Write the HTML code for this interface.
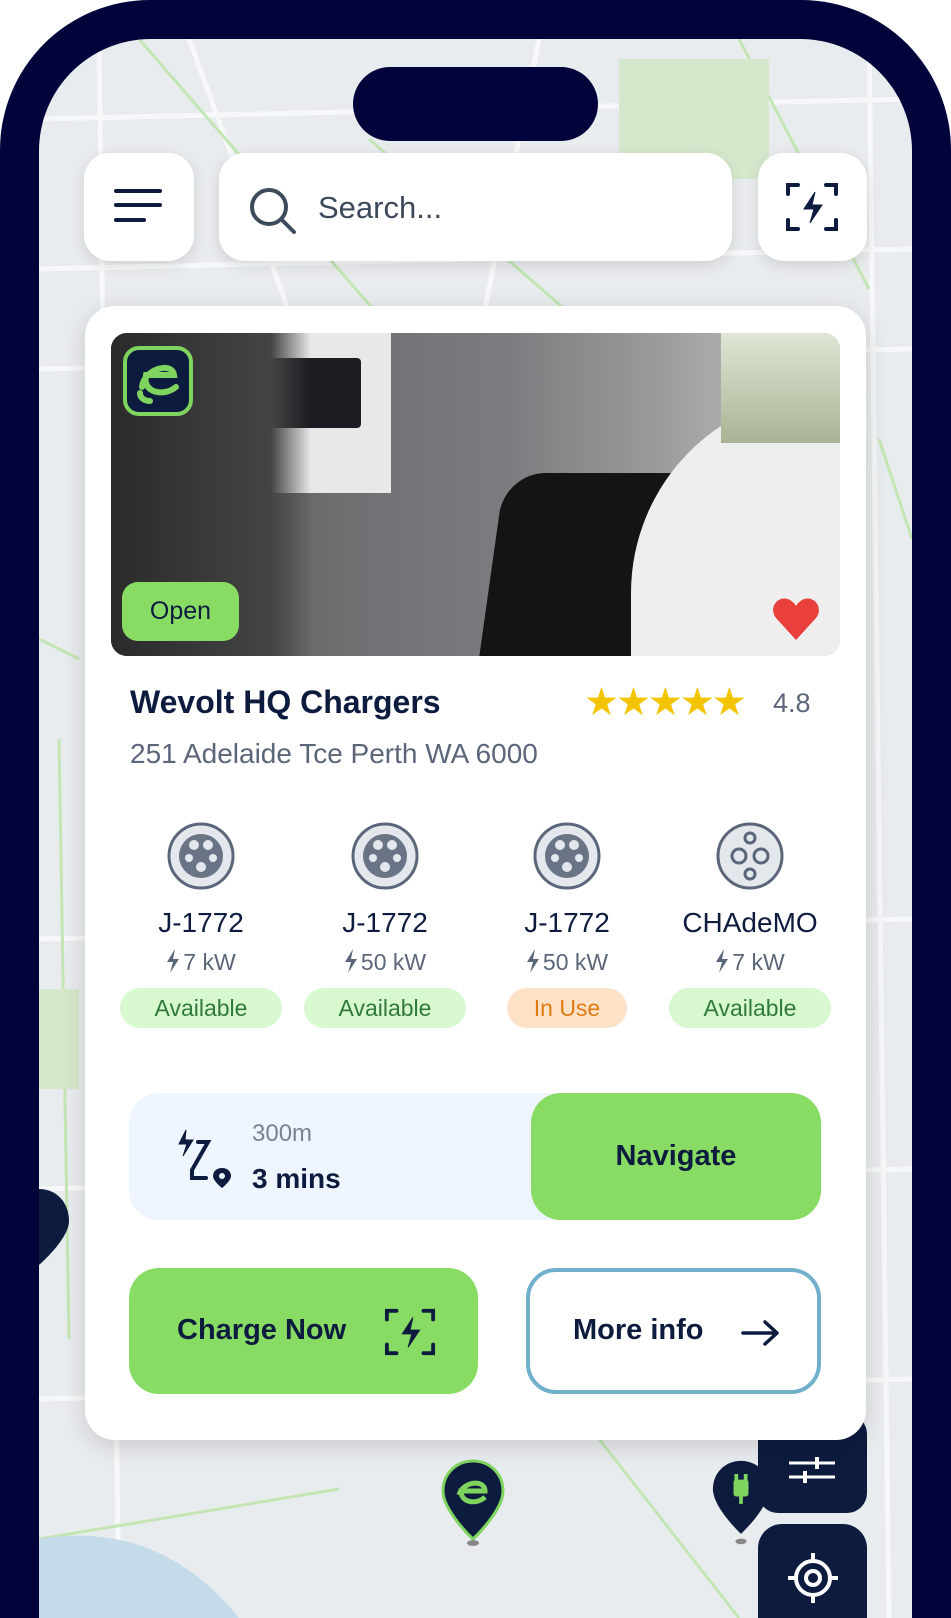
<!DOCTYPE html>
<html><head><meta charset="utf-8"><style>
*{margin:0;padding:0;box-sizing:border-box}
html,body{width:951px;height:1618px;overflow:hidden}
body{background:#fff;font-family:"Liberation Sans",sans-serif;position:relative}
.frame{position:absolute;left:0;top:0;width:951px;height:1618px;background:#02033a;border-radius:150px 150px 0 0}
.screen{position:absolute;left:39px;top:39px;width:873px;height:1579px;border-radius:112px 112px 0 0;overflow:hidden;background:#e9ecee}
.abs{position:absolute}
.btn{position:absolute;background:#fff;border-radius:26px;box-shadow:0 4px 14px rgba(0,0,0,.12)}
.card{position:absolute;left:85px;top:306px;width:781px;height:1134px;background:#fff;border-radius:30px;box-shadow:0 6px 24px rgba(0,0,0,.15)}
.conn{position:absolute;width:170px;text-align:center}
.conn .n{font-size:28px;color:#0d1b3e;margin-top:8px}
.conn .k{font-size:23px;color:#5c667a;margin-top:10px}
.conn .k svg{vertical-align:-3px;margin-right:3px}
.pill{display:inline-block;width:162px;height:40px;line-height:40px;border-radius:20px;font-size:23px;margin-top:12px}
.av{background:#d8f8d0;color:#2f7a3a}.iu{background:#fde2c8;color:#e07a12}
</style></head><body>
<div class="frame"></div>
<div class="screen">
<svg class="abs" style="left:0;top:0" width="873" height="1579">
<g stroke="#f7f8f9" stroke-width="5" fill="none">
<path d="M0 80 L873 60 M0 230 L873 210 M0 330 L873 310 M60 0 L80 1579 M830 0 L850 1579 M0 900 L873 880 M0 1150 L873 1130 M0 1360 L873 1340 M150 0 L260 300 M500 0 L440 300"/>
</g>
<g stroke="#c4e6b4" stroke-width="3" fill="none">
<path d="M100 0 L360 300 M330 100 L560 300 M700 0 L830 250 M0 600 L40 620 M0 1500 L300 1450 M560 1400 L700 1579 M840 400 L873 500 M20 700 L30 1300"/>
</g>
<rect x="580" y="20" width="150" height="120" fill="#d6e8cc"/>
<rect x="0" y="950" width="40" height="100" fill="#d6e8cc"/>
<path d="M0 1500 Q120 1480 200 1579 L0 1579Z" fill="#c4dbea"/>
</svg>
<svg class="abs" style="left:402px;top:1420px" width="64" height="88" viewBox="0 0 64 88"><path d="M32 2C15 2 2 15 2 32c0 20 30 48 30 48s30-28 30-48C62 15 49 2 32 2z" fill="#0d1b3e" stroke="#7fd45f" stroke-width="3"/><path d="M18 36c4-14 26-16 26-4H20c0 12 16 14 24 6" stroke="#7fd45f" stroke-width="5" fill="none"/><ellipse cx="32" cy="84" rx="6" ry="3" fill="#888"/></svg>
<svg class="abs" style="left:672px;top:1420px" width="60" height="88" viewBox="0 0 64 94"><path d="M32 2C15 2 2 15 2 32c0 20 30 48 30 48s30-28 30-48C62 15 49 2 32 2z" fill="#0d1b3e"/><rect x="24" y="22" width="16" height="18" rx="3" fill="#7fd45f"/><path d="M27 16v8M37 16v8M32 40v8" stroke="#7fd45f" stroke-width="4"/><ellipse cx="32" cy="88" rx="6" ry="3" fill="#888"/></svg>
<svg class="abs" style="left:0;top:1150px" width="32" height="80"><path d="M0 0C18 0 30 14 30 32c0 18-30 44-30 44z" fill="#0d1b3e"/></svg>
<div class="abs" style="left:719px;top:1375px;width:109px;height:99px;background:#0d1b3e;border-radius:20px"></div>
<svg class="abs" style="left:748px;top:1402px" width="50" height="50"><path d="M2 22h46M2 36h46" stroke="#fff" stroke-width="3"/><path d="M30 16v12M18 30v12" stroke="#fff" stroke-width="4"/></svg>
<div class="abs" style="left:719px;top:1485px;width:109px;height:120px;background:#0d1b3e;border-radius:24px"></div>
<svg class="abs" style="left:745px;top:1510px" width="58" height="58" viewBox="0 0 58 58" fill="none" stroke="#fff" stroke-width="4"><circle cx="29" cy="29" r="17"/><circle cx="29" cy="29" r="7"/><path d="M29 4v8M29 46v8M4 29h8M46 29h8"/></svg>
</div>
<div class="abs" style="left:353px;top:67px;width:245px;height:74px;border-radius:37px;background:#02033a"></div>
<div class="btn" style="left:84px;top:153px;width:110px;height:108px"></div>
<svg class="abs" style="left:114px;top:187px" width="50" height="40"><path d="M2 4h44M2 18h44M2 33h28" stroke="#0d1b3e" stroke-width="4" stroke-linecap="round"/></svg>
<div class="btn" style="left:219px;top:153px;width:513px;height:108px"></div>
<svg class="abs" style="left:248px;top:186px" width="50" height="50" viewBox="0 0 50 50" fill="none" stroke="#3d4a5c" stroke-width="4"><circle cx="21" cy="21" r="17"/><path d="M34 34l12 12" stroke-linecap="round"/></svg>
<div class="abs" style="left:318px;top:190px;font-size:31px;color:#3d4a5c">Search...</div>
<div class="btn" style="left:758px;top:153px;width:109px;height:108px"></div>
<svg class="abs" style="left:785px;top:180px" width="54" height="54" viewBox="0 0 54 54" fill="none" stroke="#0d1b3e" stroke-width="4" stroke-linecap="round"><path d="M3 14V5h10M41 5h10v9M51 40v9H41M13 49H3v-9"/><path d="M30 12L19 29h10l-4 14 12-18H27z" fill="#0d1b3e" stroke-width="1"/></svg>
<div class="card"></div>
<div class="abs" style="left:111px;top:333px;width:729px;height:323px;border-radius:16px;overflow:hidden;background:linear-gradient(90deg,#3a3a3a 0%,#6c6e70 30%,#7b7d80 55%,#9a9c9a 75%,#c8c9c5 100%)">
<div class="abs" style="left:110px;top:0;width:170px;height:160px;background:#e8e8e8"></div>
<div class="abs" style="left:160px;top:25px;width:90px;height:70px;background:#1b1d22;border-radius:4px"></div>
<div class="abs" style="left:0;top:0;width:200px;height:323px;background:linear-gradient(90deg,#2a2a2a,#444 80%,transparent)"></div>
<div class="abs" style="left:380px;top:140px;width:220px;height:200px;background:#141414;border-radius:40px 30px 0 0;transform:skewX(-8deg)"></div>
<div class="abs" style="left:520px;top:60px;width:260px;height:300px;background:#eeeeee;border-radius:200px 0 0 0"></div>
<div class="abs" style="left:610px;top:0;width:130px;height:110px;background:linear-gradient(#dfe6d4,#a8b494)"></div>
</div>
<svg class="abs" style="left:122px;top:345px" width="72" height="72" viewBox="0 0 72 72"><rect x="3" y="3" width="66" height="66" rx="14" fill="#0d1b3e" stroke="#7fd45f" stroke-width="4"/><path d="M20 42c2-18 30-26 32-12H24c-4 18 18 22 30 12M28 56c-4 0-10-2-10-8" stroke="#7fd45f" stroke-width="6" fill="none" stroke-linecap="round"/></svg>
<div class="abs" style="left:122px;top:582px;width:117px;height:59px;border-radius:16px;background:#88dc64;font-size:25px;color:#0d1b3e;text-align:center;line-height:59px">Open</div>
<svg class="abs" style="left:772px;top:596px" width="48" height="46" viewBox="0 0 48 46"><path d="M24 44L4 22C-4 12 6-2 18 4c3 2 5 4 6 6 1-2 3-4 6-6 12-6 22 8 14 18z" fill="#e9403c"/></svg>
<div class="abs" style="left:130px;top:684px;font-size:32px;font-weight:bold;color:#0d1b3e">Wevolt HQ Chargers</div>
<div class="abs" style="left:130px;top:738px;font-size:28px;color:#5c667a">251 Adelaide Tce Perth WA 6000</div>
<div class="abs" style="left:584px;top:680px;font-size:39px;color:#f5c400;letter-spacing:-3px">★★★★★</div>
<div class="abs" style="left:773px;top:688px;font-size:27px;color:#5c667a">4.8</div>
<svg width="0" height="0" style="position:absolute"><defs>
<g id="j"><circle cx="36" cy="36" r="32" fill="#e4e7ec" stroke="#5c667a" stroke-width="3"/><circle cx="36" cy="36" r="22" fill="#6b7486"/><g fill="#e4e7ec"><circle cx="29" cy="25" r="5"/><circle cx="43" cy="25" r="5"/><circle cx="36" cy="47" r="5"/><circle cx="24" cy="38" r="4"/><circle cx="48" cy="38" r="4"/></g></g>
<g id="c"><circle cx="36" cy="36" r="32" fill="#e4e7ec" stroke="#5c667a" stroke-width="3"/><g fill="none" stroke="#5c667a" stroke-width="3"><circle cx="25" cy="36" r="7"/><circle cx="47" cy="36" r="7"/><circle cx="36" cy="18" r="5"/><circle cx="36" cy="54" r="5"/></g></g>
<path id="b" d="M9 0L1 13h6l-3 11 9-14H7z" fill="#5c667a"/>
</defs></svg>
<div class="conn" style="left:116px;top:820px"><svg width="72" height="74"><use href="#j"/></svg><div class="n">J-1772</div><div class="k"><svg width="14" height="24"><use href="#b"/></svg>7 kW</div><span class="pill av">Available</span></div>
<div class="conn" style="left:300px;top:820px"><svg width="72" height="74"><use href="#j"/></svg><div class="n">J-1772</div><div class="k"><svg width="14" height="24"><use href="#b"/></svg>50 kW</div><span class="pill av">Available</span></div>
<div class="conn" style="left:482px;top:820px"><svg width="72" height="74"><use href="#j"/></svg><div class="n">J-1772</div><div class="k"><svg width="14" height="24"><use href="#b"/></svg>50 kW</div><span class="pill iu" style="width:120px">In Use</span></div>
<div class="conn" style="left:665px;top:820px"><svg width="72" height="74"><use href="#c"/></svg><div class="n">CHAdeMO</div><div class="k"><svg width="14" height="24"><use href="#b"/></svg>7 kW</div><span class="pill av">Available</span></div>
<div class="abs" style="left:129px;top:1093px;width:692px;height:127px;border-radius:30px;background:#eef5fe"></div>
<div class="abs" style="left:531px;top:1093px;width:290px;height:127px;border-radius:30px;background:#88dc64;font-size:29px;font-weight:bold;color:#0d1b3e;text-align:center;line-height:127px">Navigate</div>
<svg class="abs" style="left:174px;top:1128px" width="62" height="62" viewBox="0 0 62 62" fill="none" stroke="#0d1b3e" stroke-width="4" stroke-linecap="round"><path d="M12 2L5 16h8l-4 12 10-16h-8z" fill="#0d1b3e" stroke-width="1"/><path d="M24 14h10L18 42v8h14"/><path d="M48 40c-6 0-9 4-9 8 0 5 9 12 9 12s9-7 9-12c0-4-3-8-9-8z" fill="#0d1b3e" stroke="none"/><circle cx="48" cy="48" r="3" fill="#eef5fe" stroke="none"/></svg>
<div class="abs" style="left:252px;top:1120px;font-size:24px;color:#7a8394">300m</div>
<div class="abs" style="left:252px;top:1163px;font-size:28px;font-weight:bold;color:#0d1b3e">3 mins</div>
<div class="abs" style="left:129px;top:1268px;width:349px;height:126px;border-radius:30px;background:#88dc64"></div>
<div class="abs" style="left:177px;top:1314px;font-size:29px;font-weight:bold;color:#0d1b3e">Charge Now</div>
<svg class="abs" style="left:384px;top:1306px" width="52" height="52" viewBox="0 0 54 54" fill="none" stroke="#0d1b3e" stroke-width="4" stroke-linecap="round"><path d="M3 14V5h10M41 5h10v9M51 40v9H41M13 49H3v-9"/><path d="M30 12L19 29h10l-4 14 12-18H27z" fill="#0d1b3e" stroke-width="1"/></svg>
<div class="abs" style="left:526px;top:1268px;width:295px;height:126px;border-radius:30px;border:4px solid #70b0cc;background:#fff"></div>
<div class="abs" style="left:573px;top:1314px;font-size:29px;font-weight:bold;color:#0d1b3e">More info</div>
<svg class="abs" style="left:741px;top:1318px" width="40" height="30"><path d="M2 15h34M24 4l12 11-12 11" stroke="#0d1b3e" stroke-width="3.5" fill="none" stroke-linecap="round" stroke-linejoin="round"/></svg>
</body></html>
